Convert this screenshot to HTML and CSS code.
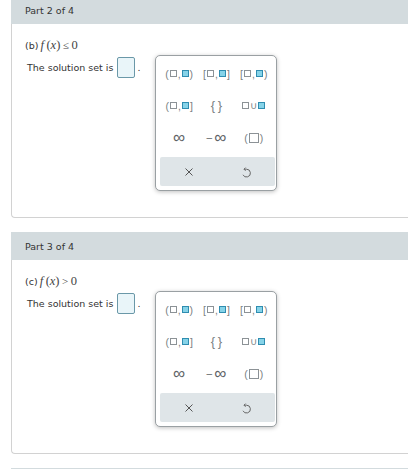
FILE: index.html
```html
<!DOCTYPE html>
<html>
<head>
<meta charset="utf-8">
<link rel="stylesheet" href="styles.css">
</head>
<body>
<div class="page">
  <section class="part">
    <header class="part-head">Part 2 of 4</header>
    <div class="part-body">
      <p class="q"><span class="lbl">(b)</span><span class="math"><i>f</i>&thinsp;(<i>x</i>)&thinsp;<span class="rel">≤</span>&thinsp;0</span></p>
      <div class="answer-row">
        <div class="answer"><span>The solution set is</span><span class="ans-box"></span><span class="dot">.</span></div>
        <div class="palette">
          <div class="keys">
            <span class="key">(<span class="sq"></span>,<span class="sq fill"></span>)</span>
            <span class="key">[<span class="sq"></span>,<span class="sq fill"></span>]</span>
            <span class="key">[<span class="sq"></span>,<span class="sq fill"></span>)</span>
            <span class="key">(<span class="sq"></span>,<span class="sq fill"></span>]</span>
            <span class="key brace">{&thinsp;}</span>
            <span class="key"><span class="sq"></span><span class="cup">∪</span><span class="sq fill"></span></span>
            <span class="key inf">∞</span>
            <span class="key inf"><span class="minus">–</span>∞</span>
            <span class="key">(<span class="sq big"></span>)</span>
          </div>
          <div class="bar">
            <span class="tool"><svg width="10" height="10" viewBox="0 0 10 10"><path d="M1.5 1.5 L8.5 8.5 M8.5 1.5 L1.5 8.5" stroke="#555" stroke-width="1" fill="none"/></svg></span>
            <span class="tool"><svg width="11" height="12" viewBox="0 0 11 12"><path d="M3 3.2 H5.6 A3.9 3.9 0 1 1 2 8.8" stroke="#666" stroke-width="1" fill="none"/><path d="M4.6 1.6 L3 3.2 L4.6 4.8" stroke="#666" stroke-width="1" fill="none"/></svg></span>
          </div>
        </div>
      </div>
    </div>
  </section>

  <section class="part">
    <header class="part-head">Part 3 of 4</header>
    <div class="part-body">
      <p class="q"><span class="lbl">(c)</span><span class="math"><i>f</i>&thinsp;(<i>x</i>)&thinsp;<span class="rel">&gt;</span>&thinsp;0</span></p>
      <div class="answer-row">
        <div class="answer"><span>The solution set is</span><span class="ans-box"></span><span class="dot">.</span></div>
        <div class="palette">
          <div class="keys">
            <span class="key">(<span class="sq"></span>,<span class="sq fill"></span>)</span>
            <span class="key">[<span class="sq"></span>,<span class="sq fill"></span>]</span>
            <span class="key">[<span class="sq"></span>,<span class="sq fill"></span>)</span>
            <span class="key">(<span class="sq"></span>,<span class="sq fill"></span>]</span>
            <span class="key brace">{&thinsp;}</span>
            <span class="key"><span class="sq"></span><span class="cup">∪</span><span class="sq fill"></span></span>
            <span class="key inf">∞</span>
            <span class="key inf"><span class="minus">–</span>∞</span>
            <span class="key">(<span class="sq big"></span>)</span>
          </div>
          <div class="bar">
            <span class="tool"><svg width="10" height="10" viewBox="0 0 10 10"><path d="M1.5 1.5 L8.5 8.5 M8.5 1.5 L1.5 8.5" stroke="#555" stroke-width="1" fill="none"/></svg></span>
            <span class="tool"><svg width="11" height="12" viewBox="0 0 11 12"><path d="M3 3.2 H5.6 A3.9 3.9 0 1 1 2 8.8" stroke="#666" stroke-width="1" fill="none"/><path d="M4.6 1.6 L3 3.2 L4.6 4.8" stroke="#666" stroke-width="1" fill="none"/></svg></span>
          </div>
        </div>
      </div>
    </div>
  </section>

  <section class="part">
    <header class="part-head"></header>
  </section>
</div>
</body>
</html>
```

FILE: styles.css
```css
html, body {
  margin: 0;
  padding: 0;
  height: 469px;
  overflow: hidden;
  background: #fff;
}
body {
  font-family: "DejaVu Sans", Verdana, sans-serif;
  font-size: 9.5px;
  color: #333;
}
.page {
  margin-top: -4px;
  padding-left: 11px;
  padding-right: 1px;
  display: flex;
  flex-direction: column;
  gap: 14px;
}
.part-head {
  height: 28px;
  line-height: 30px;
  background: #d3dbde;
  padding-left: 14px;
  color: #333;
}
.part-body {
  border-left: 1px solid #d2d2d2;
  border-bottom: 1px solid #d2d2d2;
  border-bottom-left-radius: 4px;
  padding: 12px 0 26px 13px;
}
.q {
  margin: 0;
  height: 18px;
  line-height: 18px;
  display: flex;
  align-items: baseline;
}
.lbl {
  font-size: 9.5px;
  margin-right: 2px;
}
.math {
  font-family: "Liberation Serif", "Times New Roman", serif;
  font-size: 12.5px;
  font-weight: normal;
  color: #444;
}
.math i {
  font-style: italic;
}
.rel {
  font-size: 11px;
}
.answer-row {
  margin-top: 2px;
  display: flex;
  align-items: flex-start;
}
.answer {
  margin-left: 2px;
  height: 22px;
  display: flex;
  align-items: center;
}
.ans-box {
  display: inline-block;
  width: 16px;
  height: 19px;
  margin-left: 4px;
  background: #e9f5f9;
  border: 1px solid #6a98a8;
  border-radius: 2px;
}
.dot {
  margin-left: 2px;
  width: 4px;
}
.palette {
  margin-left: 14px;
  margin-top: -1px;
  border: 1px solid #9aa0a3;
  border-radius: 5px;
  box-shadow: 0 1px 4px rgba(0, 0, 0, 0.25);
  background: #fff;
  padding: 4px 3px;
  width: 114px;
}
.keys {
  display: grid;
  grid-template-columns: repeat(3, 1fr);
  grid-template-rows: repeat(3, 27px);
  row-gap: 5px;
  padding: 0 1px;
  margin-bottom: 6px;
}
.key {
  display: flex;
  align-items: center;
  justify-content: center;
  font-family: "Liberation Sans", Arial, sans-serif;
  font-size: 10.5px;
  color: #7a7f82;
  white-space: nowrap;
}
.sq {
  display: inline-block;
  width: 5px;
  height: 5px;
  border: 1px solid #8c9296;
  margin: 0 1px;
}
.sq.fill {
  background: #86d3e8;
  border-color: #2f8db0;
}
.sq.big {
  width: 8px;
  height: 8px;
  margin: 0 1px;
}
.cup {
  font-size: 10px;
  margin: 0;
}
.brace {
  font-size: 13px;
}
.inf {
  font-family: "Liberation Sans", Arial, sans-serif;
  font-size: 17px;
  color: #5e6366;
}
.minus {
  font-size: 10px;
  margin-right: 2px;
}
.bar {
  height: 29px;
  background: #dfe5e8;
  border-radius: 2px;
  display: grid;
  grid-template-columns: 1fr 1fr;
  margin: 0 -2px 0 1px;
}
.tool {
  display: flex;
  align-items: center;
  justify-content: center;
}
```
